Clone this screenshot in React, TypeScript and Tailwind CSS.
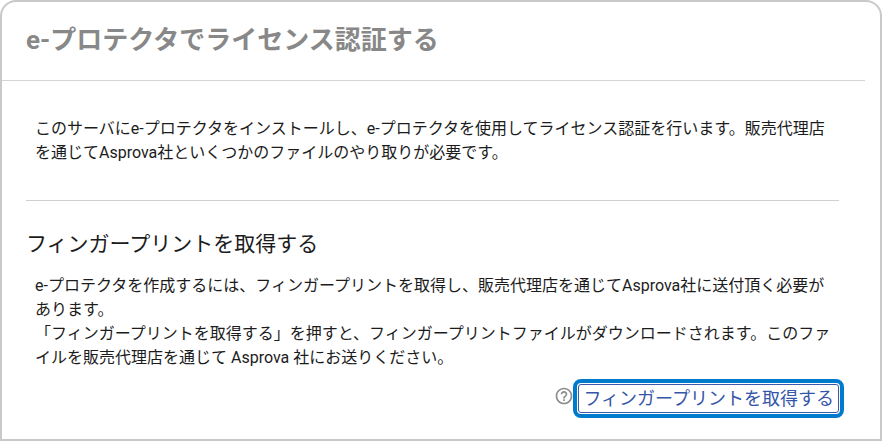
import type { ReactNode } from 'react'

interface DescriptionProps {
  children: ReactNode
}

function Description({ children }: DescriptionProps) {
  return <p className="pl-[9px] text-base leading-6">{children}</p>
}

function HelpIcon() {
  return (
    <svg viewBox="0 0 24 24" className="size-5" fill="#8c8c8c" aria-hidden="true">
      <path d="M11 18h2v-2h-2v2zm1-16C6.48 2 2 6.48 2 12s4.48 10 10 10 10-4.48 10-10S17.52 2 12 2zm0 18c-4.41 0-8-3.59-8-8s3.59-8 8-8 8 3.59 8 8-3.59 8-8 8zm0-14c-2.21 0-4 1.79-4 4h2c0-1.1.9-2 2-2s2 .9 2 2c0 2-3 1.75-3 5h2c0-2.25 3-2.5 3-5 0-2.21-1.79-4-4-4z" />
    </svg>
  )
}

export default function App() {
  return (
    <main
      lang="ja"
      className="min-h-screen rounded-t-2xl border-2 border-[#c9c9c9] bg-white pr-[15px] font-[Roboto,'Noto_Sans_CJK_JP',sans-serif] text-[#1c1c1c]"
    >
      <header className="border-b border-[#d4d4d4] px-6 pt-[18px] pb-5">
        <h1 className="text-[26px] leading-10 font-bold text-[#888888]">e-プロテクタでライセンス認証する</h1>
      </header>

      <div className="pr-[26px] pl-6">
        <section className="border-b border-[#d0d0d0] pt-9 pb-[35px]">
          <Description>
            このサーバにe-プロテクタをインストールし、e-プロテクタを使用してライセンス認証を行います。販売代理店を通じてAsprova社といくつかのファイルのやり取りが必要です。
          </Description>
        </section>

        <section className="pt-7">
          <h2 className="mb-[15px] text-[21px] leading-[30px]">フィンガープリントを取得する</h2>
          <Description>
            e-プロテクタを作成するには、フィンガープリントを取得し、販売代理店を通じてAsprova社に送付頂く必要があります。
            <br />
            「フィンガープリントを取得する」を押すと、フィンガープリントファイルがダウンロードされます。このファイルを販売代理店を通じて Asprova 社にお送りください。
          </Description>
          <div className="mt-[14px] flex items-start justify-end gap-1">
            <button type="button" aria-label="ヘルプ" className="pt-0.5">
              <HelpIcon />
            </button>
            <button
              type="button"
              className="h-[29px] rounded-[3px] border border-[#3c5aaa] px-1 text-lg leading-[26px] whitespace-nowrap text-[#3555a8] outline-4 outline-offset-1 outline-[#007acc]"
            >
              フィンガープリントを取得する
            </button>
          </div>
        </section>
      </div>
    </main>
  )
}
